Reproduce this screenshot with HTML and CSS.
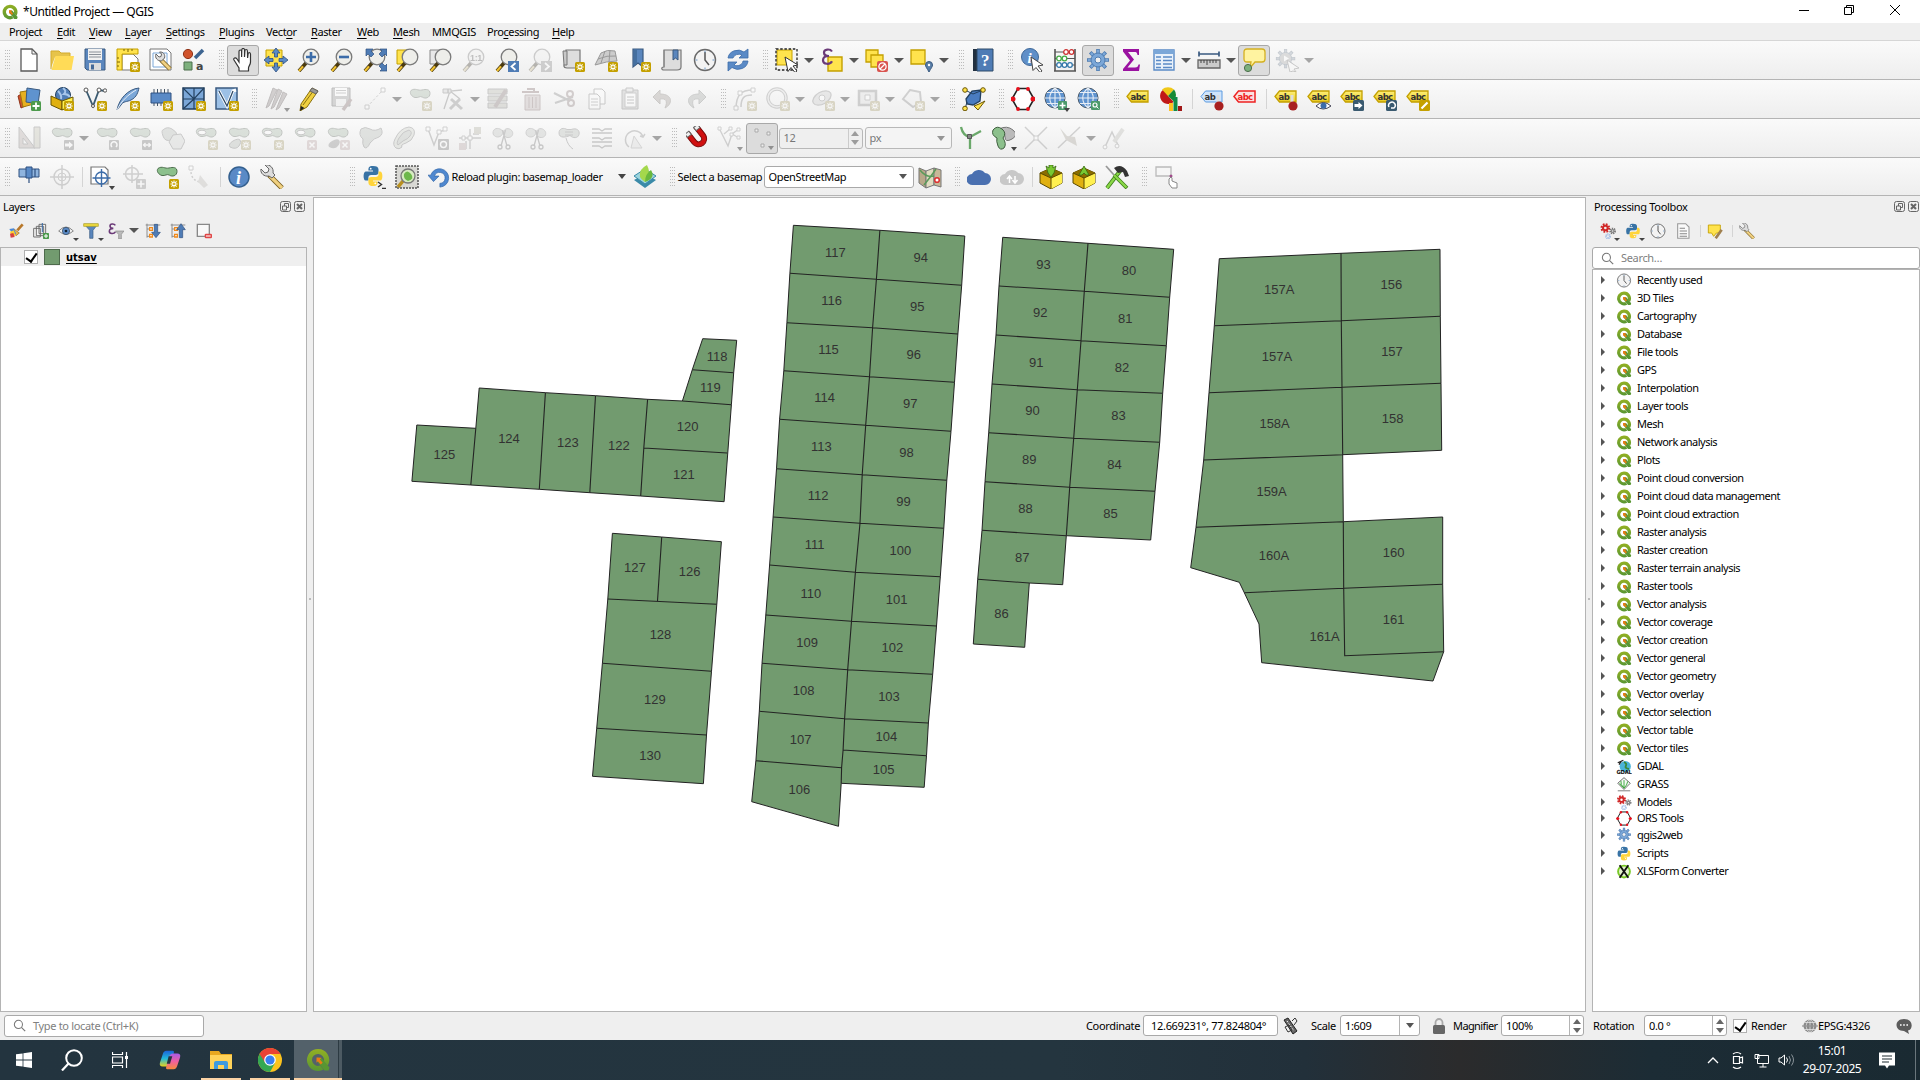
FILE: index.html
```html
<!DOCTYPE html>
<html lang="en">
<head>
<meta charset="utf-8">
<title>*Untitled Project — QGIS</title>
<link rel="stylesheet" href="styles.css">
</head>
<body>
<svg class="grads" aria-hidden="true">
<defs>
<linearGradient id="gq" x1="0" y1="0" x2="0" y2="1"><stop offset="0" stop-color="#93b023"/><stop offset="1" stop-color="#589632"/></linearGradient>
<linearGradient id="gl" x1="0" y1="0" x2="0" y2="1"><stop offset="0" stop-color="#fff07a"/><stop offset="1" stop-color="#e8c81c"/></linearGradient>
<linearGradient id="cp1" x1="0" y1="0" x2="0" y2="1"><stop offset="0" stop-color="#1b63d8"/><stop offset=".5" stop-color="#22b8d8"/><stop offset="1" stop-color="#e8d21c"/></linearGradient>
<linearGradient id="cp2" x1="0" y1="0" x2="0" y2="1"><stop offset="0" stop-color="#a95be8"/><stop offset=".5" stop-color="#ee5fa0"/><stop offset="1" stop-color="#f58a3c"/></linearGradient>
</defs>
</svg>
<svg class="defs" aria-hidden="true">
<defs>
<g id="star"><rect x="14" y="14" width="10" height="10" rx="1.5" fill="#c4a000"/><path d="M19 15.4v7.2M15.4 19h7.2M16.4 16.4l5.2 5.2M21.6 16.4l-5.2 5.2" stroke="#fff" stroke-width="1.1"/><circle cx="19" cy="19" r="1" fill="#c4a000"/></g>
<g id="blob"><path d="M3 3.500C7 .5 10 4 14 3s8-1 8 3.500-5 5.500-7.500 3.700-4.300 1-7.500.3S1 6 3 3.500z" fill="#8cc08c" stroke="#4d6e4d"/></g>
<g id="cross"><rect x="14" y="14" width="10" height="10" rx="1.500" fill="#e49a9a"/><path d="M16.500 16.500l5 5M21.500 16.500l-5 5" stroke="#fff" stroke-width="1.600"/></g>
<g id="glass"><path d="M2 23l7-8" stroke="#4a3a10" stroke-width="3.600"/><path d="M2 23l4-4.600" stroke="#f2c230" stroke-width="2.200"/><circle cx="14" cy="9" r="7.800" fill="#eeeeea" stroke="#7a7a7a" stroke-width="1.300"/></g>
<g id="gear"><path d="M12 1v22M1 12h22M4.200 4.200l15.600 15.600M19.800 4.200L4.200 19.800" stroke="#4f7cb0" stroke-width="3.600"/><path d="M12 1.800v20.400M1.800 12h20.400M4.900 4.900l14.200 14.200M19.100 4.900L4.900 19.100" stroke="#7ba7d8" stroke-width="2.200"/><circle cx="12" cy="12" r="7" fill="#7ba7d8" stroke="#4f7cb0"/><circle cx="12" cy="12" r="3" fill="#f0f0f0" stroke="#4f7cb0"/></g>
<g id="tag"><path d="M1 7.500L5.500 2H22v11H5.500z" fill="url(#gl)" stroke="#c4a000" stroke-width="1.300"/></g>
<g id="scis"><path d="M2 7c0-5 5-5.500 8-3.500S12 9 9 10.500 2 10 2 7zM12.500 7c0-4 4-5.500 7-3.500s3 6 0 7.500-7 0-7-4z" fill="#b9c4b9" stroke="#8a8a8a"/><path d="M11.500 4L16 20M14.500 4L10 20" stroke="#777" stroke-width="1.300"/><circle cx="9" cy="21" r="2" fill="none" stroke="#777" stroke-width="1.300"/><circle cx="17" cy="21" r="2" fill="none" stroke="#777" stroke-width="1.300"/></g>
<g id="globe"><circle cx="11" cy="11" r="10" fill="#5f93cf" stroke="#4a5a6a"/><path d="M1 11h20M3 5.500h16M3 16.500h16M11 1v20M11 1c-7 6-7 14 0 20M11 1c7 6 7 14 0 20" stroke="#e8eef6" stroke-width="1.100" fill="none"/></g>
<g id="box3"><path d="M1 8l11-5 11 5v10l-11 6L1 18z" fill="#e0b010" stroke="#5a4a00"/><path d="M12 13l11-5v10l-11 6z" fill="#fff050"/><path d="M1 8l11-5 11 5-11 5z" fill="#8a6d00"/><path d="M12 13v11M1 8l11 5 11-5" stroke="#5a4a00" fill="none"/></g>
</defs>
<symbol id="q" viewBox="0 0 24 24"><path d="M12 1a11 11 0 1 0 5.500 20.500L14 17.600a6 6 0 1 1 3.800-4.100l3.800 4.200A11 11 0 0 0 12 1z" fill="url(#gq)"/><path d="M11 9.500l4.500.5 8 9.500-1 3h-4L11.500 14z" fill="#589632"/><path d="M10.500 9.500l5 .3-1.600 1.800 2.800 3.200-1.900 1.800-2.900-3.300-1.400 1.500z" fill="#ee7913"/></symbol>
<symbol id="new" viewBox="0 0 24 24"><path d="M4 1h11l5 5v17H4z" fill="#fff" stroke="#5a5a5a" stroke-width="1.300"/><path d="M15 1v5h5" fill="none" stroke="#5a5a5a"/></symbol>
<symbol id="open" viewBox="0 0 24 24"><path d="M1 3h8l2 2h9v4H5L1 20z" fill="#e6c34a"/><path d="M5.500 8H24l-2.500 14H1.500z" fill="#ffdb57"/><path d="M1 21V3h8l2 2h9v3" fill="none" stroke="#d3ab2c"/></symbol>
<symbol id="save" viewBox="0 0 24 24"><path d="M2 1h20v21H4l-2-2z" fill="#5a86bd" stroke="#3a5a80"/><path d="M5 1h14v11H5z" fill="#f1f1f1"/><path d="M6 4h12M6 6.500h12M6 9h12" stroke="#8a9098"/><path d="M6 15h12v7H6z" fill="#ddd"/><path d="M8 16.500h3v5H8z" fill="#456a98"/></symbol>
<symbol id="layout" viewBox="0 0 24 24"><path d="M6 6h11l5 5v11H6z" fill="#fff" stroke="#777"/><path d="M1 1h21v5H6v16H1z" fill="#ffe34d" stroke="#c4a000"/><path d="M8 1v2M12 1v3M16 1v2M1 10h2M1 14h3M1 18h2" stroke="#7a6500"/><use href="#star"/></symbol>
<symbol id="lmgr" viewBox="0 0 24 24"><path d="M1 1h17l4 4v17H1z" fill="#fff" stroke="#777"/><path d="M4 5h14v14H4z" fill="#fff" stroke="#7ba7d8"/><path d="M12 12l9 9" stroke="#7a6020" stroke-width="4.500"/><path d="M12.500 12.500l8.500 8.500" stroke="#f0d080" stroke-width="2.800"/><path d="M7 6l3 3 2-.5.500-2.500-2-2c4-.5 6 3 5 6l-3 3c-4 0-7-3-5.500-7z" fill="#ddd" stroke="#666"/></symbol>
<symbol id="style" viewBox="0 0 24 24"><circle cx="6" cy="6" r="4.600" fill="#d0532c" stroke="#8e3318"/><path d="M13 10l8-8" stroke="#3c6490" stroke-width="3.600"/><path d="M2 14h8v8H2z" fill="#7db07d" stroke="#4d6e4d"/><text x="14" y="22" font-family="DejaVu Sans" font-size="11" fill="#444">a</text></symbol>
<symbol id="hand" viewBox="0 0 24 24"><path d="M8 23v-3L3 12c-1-2 1.500-3 3-1l2 3V3.500c0-2 2.600-2 2.600 0V9l.2-7c0-2 2.700-2 2.700 0v7l.4-6c0-2 2.500-2 2.500 0l.2 7 .5-4c.2-2 2.400-1.700 2.400.2V14c0 3-2 4-2 6v3z" fill="#fff" stroke="#333" stroke-width="1.200"/></symbol>
<symbol id="pan" viewBox="0 0 24 24"><path d="M2 2h16v16H2z" fill="#ffe34d" stroke="#c4a000"/><path d="M12 0l4 5h-2.500v4h-3V5H8zM12 24l4-5h-2.500v-4h-3v4H8zM0 12l5-4v2.500h4v3H5V16zM24 12l-5-4v2.500h-4v3h4V16z" fill="#5a8ac6" stroke="#2f5080" stroke-width=".800"/></symbol>
<symbol id="zin" viewBox="0 0 24 24"><use href="#glass"/><path d="M14 4v10M9 9h10" stroke="#3c6ca8" stroke-width="2.600"/></symbol>
<symbol id="zout" viewBox="0 0 24 24"><use href="#glass"/><path d="M9 9h10" stroke="#3c6ca8" stroke-width="2.600"/></symbol>
<symbol id="zfull" viewBox="0 0 24 24"><use href="#glass"/><path d="M3 1h7L8 3l3 3-3 3-3-3-2 2zM24 1v7l-2-2-3 3-3-3 3-3-2-2zM24 23h-7l2-2-3-3 3-3 3 3 2-2z" fill="#4f7cb5" stroke="#2f5080" stroke-width=".700"/></symbol>
<symbol id="zsel" viewBox="0 0 24 24"><path d="M1 2h10v14H1z" fill="#ffe34d" stroke="#c4a000"/><use href="#glass"/></symbol>
<symbol id="zlay" viewBox="0 0 24 24"><path d="M1 2h10v14H1z" fill="#e8e8e8" stroke="#888"/><use href="#glass"/></symbol>
<symbol id="z11" viewBox="0 0 24 24"><use href="#glass"/><text x="8" y="12.500" font-family="Liberation Sans" font-weight="bold" font-size="9" fill="#555">1:1</text></symbol>
<symbol id="zlast" viewBox="0 0 24 24"><use href="#glass"/><path d="M13 13h11v11H13z" fill="#4f7cb5"/><path d="M20.500 15l-4 3.500 4 3.500" fill="none" stroke="#fff" stroke-width="1.800"/></symbol>
<symbol id="znext" viewBox="0 0 24 24"><use href="#glass"/><path d="M13 13h11v11H13z" fill="#888"/><path d="M17 15l4 3.500-4 3.500" fill="none" stroke="#fff" stroke-width="1.800"/></symbol>
<symbol id="nmap" viewBox="0 0 24 24"><path d="M5 2h14v18H6c-4 0-4-4-1-4z" fill="#ddd" stroke="#777" stroke-width="1.200"/><path d="M2 3h4v14H3z" fill="#c8c8c8" stroke="#777"/><use href="#star"/></symbol>
<symbol id="n3d" viewBox="0 0 24 24"><path d="M7 5q6-4 14-2l2 10q-10 0-22 4z" fill="#ccc" stroke="#999"/><path d="M4 11q9-4 18-3M11 3L7 15M16 2l-1 12" stroke="#999" fill="none"/><use href="#star"/></symbol>
<symbol id="nbk" viewBox="0 0 24 24"><path d="M6 1h10v18l-5-4-5 4z" fill="#5a86bd" stroke="#3a5a80" stroke-width="1.200"/><path d="M7 1.500h3v14L7 18z" fill="#456f9f"/><use href="#star"/></symbol>
<symbol id="bk" viewBox="0 0 24 24"><path d="M4 2h17v17c0 3-2 3-4 3H4c-3 0-3-3 0-3z" fill="#ddd" stroke="#777" stroke-width="1.200"/><path d="M4 2v17" stroke="#888"/><path d="M13 2h5v10l-2.500-2-2.500 2z" fill="#5a86bd" stroke="#3a5a80"/></symbol>
<symbol id="clock" viewBox="0 0 24 24"><circle cx="12" cy="12" r="10.500" fill="#f3f3f3" stroke="#6a6a6a" stroke-width="1.400"/><path d="M12 4v8l4 5" fill="none" stroke="#555" stroke-width="1.500"/><path d="M12 2.500v2M12 19.500v2M2.500 12h2M19.500 12h2" stroke="#6d97c4"/></symbol>
<symbol id="refr" viewBox="0 0 24 24"><path d="M2 10a10 9 0 0 1 16-6l4-3v9h-9l3-3a6 5 0 0 0-9 3z" fill="#5a8ac6" stroke="#3c6ca8" stroke-width=".800"/><path d="M22 13a10 9 0 0 1-16 6.500L2 23v-9h9l-3 3a6 5 0 0 0 9-4z" fill="#5a8ac6" stroke="#3c6ca8" stroke-width=".800"/></symbol>
<symbol id="sel" viewBox="0 0 24 24"><path d="M2 2h15v15H2z" fill="#ffe34d" stroke="#c4a000"/><path d="M1 1h21v21H1z" fill="none" stroke="#222" stroke-width="1.300" stroke-dasharray="2.500 1.700"/><path d="M10 9l13 8-5 1 4 5-2 1.500-4-5-3 4z" fill="#fff" stroke="#333"/></symbol>
<symbol id="eps" viewBox="0 0 24 24"><path d="M8 9h14v14H8z" fill="#ffe34d" stroke="#c4a000" stroke-width="1.400"/><path d="M12 3.500C10 .5 4 1 4 4.500c0 2.500 2.500 3.500 5 3.500-3 0-6 1-6 4.200 0 4.300 7 4.800 9 1" fill="none" stroke="#6b3a78" stroke-width="2.200"/></symbol>
<symbol id="dsel" viewBox="0 0 24 24"><path d="M1 2h12v12H1z" fill="#ffe34d" stroke="#c4a000" stroke-width="1.300"/><path d="M6 7h12v12H6z" fill="#ffe34d" stroke="#c4a000" stroke-width="1.300"/><rect x="12" y="13" width="11" height="11" rx="2" fill="#d9534f"/><circle cx="17.500" cy="18.500" r="3.600" fill="none" stroke="#fff" stroke-width="1.300"/><path d="M15 21l5-5" stroke="#fff" stroke-width="1.300"/></symbol>
<symbol id="sloc" viewBox="0 0 24 24"><path d="M1 2h14v14H1z" fill="#ffe34d" stroke="#c4a000" stroke-width="1.300"/><path d="M19 24c-2-4-3.500-5-3.500-7a3.500 3.500 0 0 1 7 0c0 2-1.500 3-3.500 7z" fill="#5a7fa8" stroke="#3a5a80"/><circle cx="19" cy="17" r="1.200" fill="#fff"/></symbol>
<symbol id="help" viewBox="0 0 24 24"><path d="M2 1h4v22H2z" fill="#223040"/><path d="M6 1h16v22H6z" fill="#4f7cb5" stroke="#2f4a68"/><text x="10" y="18" font-family="Liberation Serif" font-size="17" fill="#fff">?</text></symbol>
<symbol id="idf" viewBox="0 0 24 24"><circle cx="10" cy="9" r="8.500" fill="#5f8fc8" stroke="#3f6898"/><text x="7.500" y="14.500" font-family="Liberation Serif" font-style="italic" font-weight="bold" font-size="15" fill="#fff">i</text><path d="M11 9l12 8-5 1 4 5-2 1.500-4-5-3 3z" fill="#fff" stroke="#444"/></symbol>
<symbol id="abac" viewBox="0 0 24 24"><path d="M2 1v22M22 1v22M1 23h22" stroke="#555" stroke-width="1.600"/><path d="M2 4h20M2 10.500h20M2 17h20" stroke="#555"/><g fill="#fff" stroke-width="1.300"><g stroke="#c33"><circle cx="13" cy="4" r="2.300"/><circle cx="18.500" cy="4" r="2.300"/></g><g stroke="#4a4"><circle cx="6" cy="10.500" r="2.300"/><circle cx="11.500" cy="10.500" r="2.300"/></g><g stroke="#37a"><circle cx="6" cy="17" r="2.300"/><circle cx="11.500" cy="17" r="2.300"/><circle cx="17" cy="17" r="2.300"/></g></g></symbol>
<symbol id="sgear" viewBox="0 0 24 24"><use href="#gear"/></symbol>
<symbol id="sum" viewBox="0 0 24 24"><path d="M4 1h16v6h-1.500c-.5-2.500-1-3-3.500-3H9l6 7.500L8.500 19.500H16c2.500 0 3-1 3.500-3H21L20 23H4v-2l7-8.500L4 3.500z" fill="#9a12a0"/></symbol>
<symbol id="table" viewBox="0 0 24 24"><path d="M2 2h20v20H2z" fill="#e9f1fa" stroke="#5a8ac6" stroke-width="1.400"/><path d="M2 2h20v4H2z" fill="#7ba7d8"/><path d="M4 9h5M11 9h9M4 12.500h5M11 12.500h9M4 16h5M11 16h9M4 19.500h5M11 19.500h9" stroke="#5a8ac6" stroke-width="1.300"/></symbol>
<symbol id="ruler" viewBox="0 0 24 24"><path d="M2 6h20M2 3.500v5M22 3.500v5" stroke="#3a5a80" stroke-width="1.700"/><path d="M1 12h22v8H1z" fill="#ccc" stroke="#666" stroke-width="1.300"/><path d="M4 12v3M7 12v3M10 12v5M13 12v3M16 12v3M19 12v3" stroke="#444"/></symbol>
<symbol id="tip" viewBox="0 0 24 24"><path d="M5 1h15q3 0 3 3v7q0 3-3 3h-7l-5 6 1-6H5q-3 0-3-3V4q0-3 3-3z" fill="#fff3a0" stroke="#d4b020" stroke-width="1.300"/><circle cx="6" cy="20" r="3.600" fill="#7db07d" stroke="#4d6e4d"/></symbol>
<symbol id="act" viewBox="0 0 24 24"><g transform="scale(.88)"><use href="#gear"/></g><circle cx="10.500" cy="10.500" r="5.500" fill="#aaa"/><path d="M9 7.500l5 3-5 3z" fill="#fff"/><path d="M12 12l12 8-5 1 2 3-3-1-3 1z" fill="#fff" stroke="#777"/></symbol>
<symbol id="dsm" viewBox="0 0 24 24"><path d="M1 9l10-6 3 13-10 5z" fill="#d0532c" stroke="#8e3318"/><path d="M3 5l12-2 2 14-11 3z" fill="#e8b020" stroke="#a07810"/><path d="M10 1l13 2-2 14-12-2z" fill="#5f93cf" stroke="#3a5a80"/><rect x="14" y="14" width="10" height="10" rx="1.500" fill="#4c9a4c"/><path d="M19 15.500v7M15.500 19h7" stroke="#fff" stroke-width="1.800"/></symbol>
<symbol id="gpkg" viewBox="0 0 24 24"><circle cx="13" cy="8" r="7.500" fill="#4f7cb5" stroke="#23405f"/><path d="M8 4q4 4 3 8M13 1q4 3 1 6 4 0 6 3" stroke="#a8c6ea" stroke-width="2" fill="none"/><path d="M1 9l11 5v9L1 18z" fill="#e0b010" stroke="#6a5500"/><path d="M12 14l11-4v8l-11 5z" fill="#fff050" stroke="#6a5500"/><use href="#star"/></symbol>
<symbol id="vnew" viewBox="0 0 24 24"><path d="M3 3l7 16L16 3l6 1" fill="none" stroke="#3a5a70" stroke-width="1.800"/><g fill="#fff" stroke="#555"><circle cx="3" cy="3" r="2"/><circle cx="16" cy="3" r="2"/><circle cx="22" cy="3.500" r="1.700"/><circle cx="10" cy="19" r="1.500"/></g><use href="#star"/></symbol>
<symbol id="spl" viewBox="0 0 24 24"><path d="M1 23C3 12 12 2 23 1c-1 4-2 9-8 12-4 2-8 1-10 5z" fill="#7ba7d8" stroke="#3a5a80"/><path d="M1 23C6 13 12 8 20 3" fill="none" stroke="#e8eef6"/><use href="#star"/></symbol>
<symbol id="mem" viewBox="0 0 24 24"><path d="M5 2v17M8.500 2v17M12 2v17M15.500 2v17M19 2v17" stroke="#456"/><path d="M2 6h20v10H2z" fill="#5a8ac6" stroke="#2f5080"/><use href="#star"/></symbol>
<symbol id="mesh" viewBox="0 0 24 24"><path d="M1 1h21v21H1z" fill="#7ba7d8" stroke="#23405f" stroke-width="1.500"/><path d="M1 12h21M12 1v21M1 1l11 11L22 1M1 22l11-10" stroke="#23405f" stroke-width="1.200" fill="none"/><use href="#star"/></symbol>
<symbol id="virt" viewBox="0 0 24 24"><path d="M1 1h21v21H1z" fill="#9cc0e6" stroke="#3a5a80" stroke-width="1.500"/><path d="M4 4l8 15L18 4l3-1" fill="none" stroke="#fff" stroke-width="3"/><path d="M4 4l8 15L18 4" fill="none" stroke="#2f4a68" stroke-width="1.300"/><use href="#star"/></symbol>
<symbol id="pens" viewBox="0 0 24 24"><path d="M2 21L9 1l4 2L5 19zM7 22L14 2l4 2-8 16zM12 23l7-18 4 2-8 14z" fill="#a08080" stroke="#6a5050"/></symbol>
<symbol id="pen" viewBox="0 0 24 24"><path d="M4 17L15 1l6 3L10 20l-7 4z" fill="#f0d040" stroke="#8a7010"/><path d="M6 18L17 3" stroke="#8a7010"/><path d="M15 1l6 3-2 3-6-3z" stroke="#666" fill="#999"/><path d="M3 24l1-5 3.500 2z" fill="#222"/></symbol>
<symbol id="saved" viewBox="0 0 24 24"><path d="M2 1h18v18H2z" fill="#999" stroke="#555"/><path d="M5 1h12v8H5z" fill="#fff"/><path d="M6 3.500h10M6 6h10" stroke="#888"/><path d="M6 12h10v7H6z" fill="#eee"/><path d="M13 23l8-11" stroke="#a66" stroke-width="3.500"/></symbol>
<symbol id="seg" viewBox="0 0 24 24"><path d="M4 20L20 3" stroke="#888" stroke-dasharray="2.500 2"/><path d="M2 18h4v4H2zM18 1h4v4h-4z" fill="#fff" stroke="#888"/></symbol>
<symbol id="addp" viewBox="0 0 24 24"><use href="#blob"/><use href="#star"/></symbol>
<symbol id="vtool" viewBox="0 0 24 24"><path d="M3 22L9 4l12-1M9 4l10 8" stroke="#777" stroke-width="1.300" fill="none"/><path d="M2 2h5v4H2zM7 2h3v4H7z" fill="#ccc" stroke="#777"/><path d="M9 22l10-10M10 12l11 10" stroke="#888" stroke-width="3"/></symbol>
<symbol id="mod" viewBox="0 0 24 24"><path d="M2 2h19v5H2zM2 9h19v5H2zM2 16h19v5H2z" fill="#b8b89a" stroke="#777"/><path d="M9 20L20 3" stroke="#a07070" stroke-width="4"/></symbol>
<symbol id="trash" viewBox="0 0 24 24"><path d="M3 5h17M8 2h7v3" stroke="#a66" stroke-width="2" fill="none"/><path d="M6 8h15v15H6z" fill="#d8b0b0" stroke="#a66"/><path d="M10 10v11M13.500 10v11M17 10v11" stroke="#a66"/></symbol>
<symbol id="cut" viewBox="0 0 24 24"><path d="M2 6l16 8M3 16l18-6" stroke="#888" stroke-width="2.200"/><circle cx="19" cy="16" r="3" fill="none" stroke="#a77" stroke-width="2"/><circle cx="18" cy="7" r="3" fill="none" stroke="#a77" stroke-width="2"/></symbol>
<symbol id="copy" viewBox="0 0 24 24"><path d="M9 2h8l3 3v12H9z" fill="#fff" stroke="#777"/><path d="M4 7h8l3 3v12H4z" fill="#fff" stroke="#777"/><path d="M6 12h7M6 15h7M6 18h7" stroke="#888"/></symbol>
<symbol id="paste" viewBox="0 0 24 24"><path d="M4 3h16v19H4z" fill="#bbb" stroke="#777"/><path d="M7 6h11v14H7z" fill="#fff" stroke="#888"/><path d="M8 1h7v4H8zM9 10h7M9 13h7M9 16h7" fill="#ddd" stroke="#777"/></symbol>
<symbol id="undo" viewBox="0 0 24 24"><path d="M9 3L2 10l7 7v-5c6-1 8 2 5 9 8-4 8-14-5-14z" fill="#b09a88" stroke="#8a7a6a"/></symbol>
<symbol id="redo" viewBox="0 0 24 24"><path d="M15 3l7 7-7 7v-5c-6-1-8 2-5 9-8-4-8-14 5-14z" fill="#a0aaa0" stroke="#7a847a"/></symbol>
<symbol id="arc" viewBox="0 0 24 24"><path d="M3 22C3 8 8 3 20 3M8 20c0-9 3-12 11-12" fill="none" stroke="#888" stroke-width="1.500"/><path d="M1 19h4v4H1zM18 1h4v4h-4zM5 4h4v4H5z" fill="#fff" stroke="#888"/><use href="#star"/></symbol>
<symbol id="circ" viewBox="0 0 24 24"><circle cx="11" cy="11" r="9" fill="none" stroke="#888" stroke-width="3.500"/><circle cx="11" cy="11" r="9" fill="none" stroke="#ddd" stroke-width="1.500"/><use href="#star"/></symbol>
<symbol id="ell" viewBox="0 0 24 24"><ellipse cx="11" cy="11" rx="10" ry="6" transform="rotate(-30 11 11)" fill="#ccc" stroke="#888" stroke-width="1.300"/><circle cx="11" cy="11" r="3" fill="#fff" stroke="#888"/><use href="#star"/></symbol>
<symbol id="rect" viewBox="0 0 24 24"><path d="M3 4h17v14H3z" fill="#ddd" stroke="#888" stroke-width="2.500"/><path d="M9 8h5v5H9z" fill="#fff" stroke="#888"/><use href="#star"/></symbol>
<symbol id="poly" viewBox="0 0 24 24"><path d="M9 3l10 2 1 10-8 5-10-8z" fill="#eee" stroke="#888" stroke-width="2"/><use href="#star"/></symbol>
<symbol id="dig" viewBox="0 0 24 24"><path d="M4 12L10 4l9-1-1 11-7 4-6-1z" fill="#4a7cc0" stroke="#23405f" stroke-width="1.300"/><path d="M3 3l8 4 10-4M3 22L5 15" stroke="#23405f" fill="none"/><g fill="#ffe34d" stroke="#6a5500"><circle cx="3" cy="3" r="2.300"/><circle cx="21" cy="3" r="2.300"/><circle cx="3" cy="21.500" r="2.300"/></g><path d="M12 19l4 4 7-9-6 3z" fill="#ffe34d" stroke="#6a5500"/></symbol>
<symbol id="ors" viewBox="0 0 24 24"><path d="M7 1.500h10L23 12l-6 10.500H7L1 12z" fill="#fff" stroke="#222" stroke-width="1.600"/><g fill="#e8101c"><circle cx="7" cy="2" r="1.900"/><circle cx="17" cy="2" r="1.900"/><circle cx="22" cy="12" r="2.500"/><circle cx="17" cy="22" r="1.900"/><circle cx="7" cy="22" r="1.900"/><circle cx="2" cy="12" r="2.500"/></g></symbol>
<symbol id="gadd" viewBox="0 0 24 24"><use href="#globe"/><rect x="14" y="14" width="9" height="9" rx="1" fill="#4c9a6c"/><path d="M18.500 15.500v6M15.500 18.500h6" stroke="#fff" stroke-width="1.600"/></symbol>
<symbol id="gsea" viewBox="0 0 24 24"><use href="#globe"/><rect x="14" y="14" width="9" height="9" rx="1" fill="#4c9a6c"/><circle cx="18" cy="18" r="2" fill="none" stroke="#fff" stroke-width="1.200"/><path d="M19.500 19.500l2 2" stroke="#fff"/></symbol>
<symbol id="abc" viewBox="0 0 24 24"><use href="#tag" y="2"/><text class="lt" x="4.500" y="13">abc</text></symbol>
<symbol id="dia" viewBox="0 0 24 24"><path d="M9 9V1a8 8 0 1 0 5.700 13.700z" fill="#c01818"/><path d="M9 9L3 2.500a9 9 0 0 1 12 0z" fill="#f0c818"/><path d="M9 9l6-6.500q4 5 0 12z" fill="#158a35"/><path d="M10 16h4v8h-4z" fill="#ffc020"/><path d="M14.500 10h4v14h-4z" fill="#108a48"/><path d="M19 19h4v5h-4z" fill="#a01818"/></symbol>
<symbol id="abb" viewBox="0 0 24 24"><path d="M1 9.500L5.500 4H22v11H5.500z" fill="#cfe4fb" stroke="#5a9ae0"/><text class="lt" x="4.500" y="13">ab</text><path d="M18 8v8" stroke="#ddd" stroke-width="3"/><circle cx="19" cy="19" r="4.600" fill="#a82020"/></symbol>
<symbol id="abr" viewBox="0 0 24 24"><path d="M1 9.500L5.500 4H22v11H5.500z" fill="#fbe0e0" stroke="#e22" stroke-width="1.500"/><text class="lt red" x="4.500" y="13">abc</text></symbol>
<symbol id="abp" viewBox="0 0 24 24"><use href="#tag" y="2"/><text class="lt" x="4.500" y="13">ab</text><path d="M18 8v8" stroke="#ddd" stroke-width="3"/><circle cx="19" cy="19" r="4.600" fill="#a82020"/></symbol>
<symbol id="abe" viewBox="0 0 24 24"><use href="#tag" y="2"/><text class="lt" x="4.500" y="13">abc</text><path d="M9 19q7-7 15 0-8 6-15 0z" fill="#fff" stroke="#445"/><circle cx="16.500" cy="18.800" r="3" fill="#3c6ca8"/></symbol>
<symbol id="abm" viewBox="0 0 24 24"><use href="#tag" y="2"/><text class="lt" x="4.500" y="13">abc</text><rect x="13" y="13" width="11" height="11" rx="1.500" fill="#3a5a70"/><path d="M14.500 17h4v-2l4 3.500-4 3.500v-2h-4z" fill="#fff"/></symbol>
<symbol id="abo" viewBox="0 0 24 24"><use href="#tag" y="2"/><text class="lt" x="4.500" y="13">abc</text><rect x="13" y="13" width="11" height="11" rx="1.500" fill="#3a5a70"/><path d="M16 20a3.300 3.300 0 1 1 5 1h-3" fill="none" stroke="#fff" stroke-width="1.500"/></symbol>
<symbol id="abd" viewBox="0 0 24 24"><use href="#tag" y="2"/><text class="lt" x="4.500" y="13">abc</text><rect x="13" y="13" width="11" height="11" rx="1.500" fill="#c4a000"/><path d="M15.500 21.500l6-6" stroke="#fff" stroke-width="2.200"/></symbol>
<symbol id="setsq" viewBox="0 0 24 24"><path d="M2 1l16 21H2zM6 12v6h5z" fill="#c8a89c" stroke="#777" fill-rule="evenodd"/><path d="M17 1h6v21h-6z" fill="#c8c490" stroke="#777"/></symbol>
<symbol id="mvf" viewBox="0 0 24 24"><use href="#blob"/><rect x="14" y="14" width="10" height="10" rx="1" fill="#777"/><path d="M15 17.500h4v-2l4 3.500-4 3.500v-2h-4z" fill="#fff"/></symbol>
<symbol id="rotf" viewBox="0 0 24 24"><use href="#blob"/><rect x="14" y="14" width="10" height="10" rx="1" fill="#777"/><path d="M17 21a3 3 0 1 1 4 0" fill="none" stroke="#fff" stroke-width="1.500"/></symbol>
<symbol id="sclf" viewBox="0 0 24 24"><use href="#blob"/><rect x="14" y="14" width="10" height="10" rx="1" fill="#777"/><path d="M16 19h6M17.500 17l-2 2 2 2M20.500 17l2 2-2 2" stroke="#fff" fill="none" stroke-width="1.300"/></symbol>
<symbol id="simp" viewBox="0 0 24 24"><path d="M2 4q4-4 9-1t5 6-6 5-8-4 0-6z" fill="#a9c0a9" stroke="#777"/><path d="M12 9l8-1 4 7-4 8h-8l-4-7z" fill="#cdd6cd" stroke="#777"/></symbol>
<symbol id="ring" viewBox="0 0 24 24"><use href="#blob"/><ellipse cx="8" cy="6.500" rx="4" ry="2.300" fill="#fff" stroke="#777"/><use href="#star"/></symbol>
<symbol id="part" viewBox="0 0 24 24"><use href="#blob"/><path d="M3 21q-2-3 3-6t7-1-1 6-9 1z" fill="#a9c0a9" stroke="#777"/><use href="#star"/></symbol>
<symbol id="dring" viewBox="0 0 24 24"><use href="#blob"/><ellipse cx="8" cy="6.500" rx="4" ry="2.300" fill="#fff" stroke="#777"/><use href="#cross"/></symbol>
<symbol id="dpart" viewBox="0 0 24 24"><use href="#blob"/><path d="M3 21q-2-3 3-6t7-1-1 6-9 1z" fill="#888"/><use href="#cross"/></symbol>
<symbol id="resh" viewBox="0 0 24 24"><path d="M2 3q4-3 9 0t11-1q3 6-2 9-5 1-9 6-3 7-6 4-2-3-1-8-5-4-2-10z" fill="#a9c0a9" stroke="#777"/></symbol>
<symbol id="offs" viewBox="0 0 24 24"><path d="M4 22q-4-3-1-9Q8 2 17 1q7 1 5 8-2 6-8 8t-4 4q-3 3-6 1z" fill="#c8d4b8" stroke="#777"/><path d="M6 19q-2-2 1-7 4-7 10-8 4 2 1 6-2 3-7 5z" fill="#a9c0a9" stroke="#777"/></symbol>
<symbol id="spf" viewBox="0 0 24 24"><path d="M3 3l6 16L14 6l6-2" fill="none" stroke="#888" stroke-width="1.500"/><path d="M1 1h4v4H1zM12 4h4v4h-4zM18 1h4v4h-4z" fill="#fff" stroke="#888"/><rect x="13" y="13" width="11" height="11" rx="1" fill="#777"/><circle cx="18.500" cy="18.500" r="3" fill="none" stroke="#fff" stroke-width="1.400"/></symbol>
<symbol id="spx" viewBox="0 0 24 24"><path d="M1 12h22M12 3v20M15 8h6M8 15v8" stroke="#888" stroke-width="1.400"/><path d="M10 10h4v4h-4zM4 10h3v4H4z" fill="#fff" stroke="#888"/><rect x="16" y="1" width="7" height="7" fill="#b8b080"/><rect x="1" y="17" width="7" height="7" fill="#d8a0a0"/></symbol>
<symbol id="sc" viewBox="0 0 24 24"><use href="#scis"/></symbol>
<symbol id="mrg" viewBox="0 0 24 24"><path d="M2 7c0-5 5-5.500 8-3.500h4c6-2 9 1 8 5s-6 4-9 1c-4 2-11 3-11-2.500z" fill="#a9c0a9" stroke="#777"/><path d="M8 6h8M8 9h8M9 12q2 8 7 11" stroke="#777" fill="none"/></symbol>
<symbol id="attr" viewBox="0 0 24 24"><path d="M2 3h7l3 2 3-2h7M2 7h20M2 12h7l3 2 3-2h7M2 16h20M2 20h7l3 2 3-2h7" stroke="#777" stroke-width="1.300" fill="none"/></symbol>
<symbol id="rpt" viewBox="0 0 24 24"><path d="M6 21a9 9 0 1 1 14-10M17 10l3 1 2-3" fill="none" stroke="#888" stroke-width="1.500"/><path d="M11 10l8 12H8z" fill="#ddd" stroke="#999"/></symbol>
<symbol id="mag" viewBox="0 0 24 24"><g transform="rotate(-38 12 12)"><path d="M4 2h5v11a3 3 0 0 0 6 0V2h5v11a8 8 0 0 1-16 0z" fill="#d01010" stroke="#7a0808"/><path d="M4 1h5v4H4zM15 1h5v4h-5z" fill="#eee" stroke="#666"/></g></symbol>
<symbol id="vall" viewBox="0 0 24 24"><path d="M2 2l9 18L15 8l7-5M15 8l7 4M7 8l6-5" fill="none" stroke="#888" stroke-width="1.400"/><path d="M1 1h3v3H1zM12 1h3v3h-3zM20 2h3v3h-3zM20 10h3v3h-3zM13 7h3v3h-3z" fill="#fff" stroke="#888"/></symbol>
<symbol id="dots" viewBox="0 0 24 24"><path d="M5 3h3v3H5zM17 6h3v3h-3zM11 18h3v3h-3z" fill="#eee" stroke="#aaa"/></symbol>
<symbol id="topo" viewBox="0 0 24 24"><path d="M3 1q2 9 9 10v12M12 11l11-6" fill="none" stroke="#6aa86a" stroke-width="2.300"/><path d="M9.500 8.500h4v4h-4z" fill="#888" stroke="#555"/></symbol>
<symbol id="over" viewBox="0 0 24 24"><path d="M8 3q8-4 14 1t-1 9-7-2-6-8z" fill="#bbb" stroke="#777"/><path d="M2 4q4-5 9-1t1 9q4 6 1 10-4 3-6-2t-1-8q-6-3-4-8z" fill="#8cc08c" stroke="#3f5f3f"/></symbol>
<symbol id="xx" viewBox="0 0 24 24"><path d="M1 1l22 22M23 1L1 23" stroke="#888" stroke-width="1.500"/><path d="M10 10h4v4h-4z" fill="#fff" stroke="#888"/></symbol>
<symbol id="selfx" viewBox="0 0 24 24"><path d="M1 22L23 1" stroke="#888" stroke-width="1.500"/><path d="M3 2l6 12 11 6-2-9-8-1z" fill="#b0a080"/></symbol>
<symbol id="trc" viewBox="0 0 24 24"><path d="M3 21L10 6l6 13" fill="none" stroke="#888" stroke-width="1.500"/><path d="M12 16L21 3" stroke="#b8b8a8" stroke-width="4"/><circle cx="3" cy="21" r="2" fill="#fff" stroke="#888"/><circle cx="15" cy="20" r="2" fill="#fff" stroke="#888"/></symbol>
<symbol id="gpsd" viewBox="0 0 24 24"><path d="M2 4h20v8H2z" fill="#8fb4de" stroke="#2f5080"/><path d="M9 2h6v11H9z" fill="#5a8ac6" stroke="#2f5080"/><path d="M12 13v5M18 4v8" stroke="#2f5080" stroke-width="1.200"/></symbol>
<symbol id="tgt" viewBox="0 0 24 24"><circle cx="12" cy="12" r="8" fill="none" stroke="#888" stroke-width="1.500"/><circle cx="12" cy="12" r="4" fill="none" stroke="#888"/><path d="M12 0v24M0 12h24" stroke="#888" stroke-width="1.500"/></symbol>
<symbol id="recen" viewBox="0 0 24 24"><path d="M2 2h14l3 3v14H2z" fill="#fff" stroke="#777" stroke-width="1.200"/><circle cx="12.500" cy="13" r="6" fill="none" stroke="#3c6ca8" stroke-width="1.400"/><path d="M12.500 4v18M3.500 13h18" stroke="#3c6ca8" stroke-width="1.400"/></symbol>
<symbol id="tadd" viewBox="0 0 24 24"><circle cx="10" cy="9" r="6.500" fill="none" stroke="#888" stroke-width="1.500"/><path d="M10 0v18M1 9h20" stroke="#888" stroke-width="1.500"/><rect x="14" y="14" width="10" height="10" rx="1" fill="#888"/><path d="M19 15.500v7M15.500 19h7" stroke="#fff" stroke-width="1.600"/></symbol>
<symbol id="trk" viewBox="0 0 24 24"><path d="M3 3q-1 13 10 14" fill="none" stroke="#888" stroke-dasharray="2 2" stroke-width="1.500"/><path d="M1 1h4v4H1z" fill="#fff" stroke="#888"/><path d="M12 10l8 10-4 3-6-6z" fill="#c0b8a8"/></symbol>
<symbol id="info" viewBox="0 0 24 24"><circle cx="12" cy="12" r="10" fill="#5a8ac6" stroke="#34608f" stroke-width="1.500"/><text x="9" y="18.500" font-family="Liberation Serif" font-style="italic" font-weight="bold" font-size="18" fill="#fff">i</text></symbol>
<symbol id="wren" viewBox="0 0 24 24"><path d="M9 10l13 13" stroke="#7a6020" stroke-width="5"/><path d="M10 11l12 12" stroke="#f0d080" stroke-width="3.200"/><path d="M1 4l4 4 3-1 1-3-4-4c5-1 9 3 8 8l2 2-3 3-3-2C4 12 0 8 1 4z" fill="#ddd" stroke="#666"/></symbol>
<symbol id="py" viewBox="0 0 24 24"><path d="M12 1C7 1 7 3 7 6h5v1H4C1 7 1 17 4 17h3v-3c0-2 1-3 3-3h5c2 0 3-1 3-3V5c0-3-2-4-6-4z" fill="#3873a5"/><path d="M12 23c5 0 5-2 5-5h-5v-1h8c3 0 3-10 0-10h-2v3c0 2-1 3-3 3h-5c-2 0-3 1-3 3v3c0 3 2 4 5 4z" fill="#ffd43b"/><circle cx="9.500" cy="4" r="1" fill="#fff"/><circle cx="14.500" cy="20" r="1" fill="#fff"/></symbol>
<symbol id="pyc" viewBox="0 0 24 24"><use href="#py" width="22" height="22"/><path d="M16 17l3.500 2.500L16 22M20 23.500h4" stroke="#333" stroke-width="1.400" fill="none"/></symbol>
<symbol id="qms" viewBox="0 0 24 24"><path d="M1 1h22v22H1z" fill="#d8d8d4" stroke="#555" stroke-width="1.500" stroke-dasharray="2 1"/><path d="M3 22l5-6" stroke="#b89020" stroke-width="3.500"/><circle cx="13" cy="11" r="7" fill="#d6ecc0" stroke="#777" stroke-width="1.300"/><path d="M9 9q3-5 7 0t-3 7q-5-2-4-7z" fill="#6cb84a"/></symbol>
<symbol id="rel" viewBox="0 0 24 24"><path d="M7 11a6 6 0 1 1 6 8v4A10 10 0 1 0 3 10H0l6 7 6-6z" fill="#4f88d0" stroke="#3468a8" stroke-width=".800"/></symbol>
<symbol id="leaf" viewBox="0 0 24 24"><path d="M1 15l11-6 11 6-11 8z" fill="#3a8aa8"/><path d="M1 11l11-7 11 7-11 8z" fill="#9cd4dc" stroke="#3a8aa8"/><path d="M12 17Q4 12 8 5q2-3 6-5 5 9-2 17z" fill="#a4d84c"/><path d="M12 17Q12 9 18 5q5 8-6 12z" fill="#6ab83c"/></symbol>
<symbol id="fold" viewBox="0 0 24 24"><path d="M1 3l7 3v17l-7-5z" fill="#b8a888" stroke="#777"/><path d="M8 6l8-3v17l-8 3z" fill="#e0dcc0" stroke="#777"/><path d="M16 3l7 2v17l-7-2z" fill="#c8b898" stroke="#777"/><path d="M2 5q6 8 14 6M6 20q8-10 12-16" stroke="#5a9a5a" fill="none" stroke-width="1.500"/><circle cx="19" cy="15" r="2.300" fill="#fff" stroke="#d33" stroke-width="1.600"/></symbol>
<symbol id="cld" viewBox="0 0 24 24"><path d="M6 20a6 5.500 0 0 1-1-11 7.500 7 0 0 1 13-1 6 6 0 0 1 0 12z" fill="#4a70b0"/></symbol>
<symbol id="cldg" viewBox="0 0 24 24"><path d="M6 20a6 5.500 0 0 1-1-11 7.500 7 0 0 1 13-1 6 6 0 0 1 0 12z" fill="#c8c8c8"/><path d="M9.500 18v-6M7 14l2.500-3 2.500 3M15 11v6M12.500 15l2.500 3 2.500-3" stroke="#fff" stroke-width="1.500" fill="none"/></symbol>
<symbol id="bdn" viewBox="0 0 24 24"><use href="#box3"/><path d="M7 1l3 2V0h4v3l3-2-2 7-3 4-3-4z" fill="#78c832" stroke="#3a6a10" stroke-width=".800"/></symbol>
<symbol id="bup" viewBox="0 0 24 24"><use href="#box3"/><path d="M12 1l5 9h-3l-2-2-2 2H7z" fill="#78c832" stroke="#3a6a10" stroke-width=".800"/></symbol>
<symbol id="hmr" viewBox="0 0 24 24"><path d="M2 23L15 6" stroke="#3a7a18" stroke-width="4"/><path d="M2 23L15 6" stroke="#8ad848" stroke-width="2.400"/><path d="M9 3q7-5 13 3l2 5-4 1-2-5-5 1z" fill="#333"/><path d="M9 10l13 13" stroke="#3a7a18" stroke-width="3.800"/><path d="M9 10l12.500 12.500" stroke="#8ad848" stroke-width="2.400"/><path d="M1 1l8 9" stroke="#999" stroke-width="1.800"/></symbol>
<symbol id="idr" viewBox="0 0 24 24"><path d="M2 2h15v9H2z" fill="#f6f6f6" stroke="#bbb" stroke-width="1.300"/><circle cx="17" cy="11" r="1.500" fill="#a04a8a"/><path d="M15 14v5l3 4h5v-5l-5-2v-3q-1-2-2 0z" fill="#fff" stroke="#888"/></symbol>
<symbol id="brush" viewBox="0 0 24 24"><path d="M14 11l8-9" stroke="#b8782a" stroke-width="4"/><path d="M9 9l8 6-5 4-6-6z" fill="#e8b850" stroke="#986820"/><path d="M2 9l7-1 3 8-4 2z" fill="#4a88d8"/><path d="M3 13l6-2 2 8-6 1z" fill="#ffd030"/><path d="M3 16l5-1 2 6-6 1z" fill="#d84040"/></symbol>
<symbol id="grp" viewBox="0 0 24 24"><path d="M1 8h10v13H1z M5 5h11v14H5zM9 2h10v14H9z" fill="#f4f4f4" stroke="#666" stroke-width="1.400"/><path d="M14 0v14" stroke="#3c6ca8" stroke-width="1.600"/><rect x="15" y="15" width="9" height="9" rx="1" fill="#4c9a4c"/><path d="M19.500 16.500v6M16.500 19.500h6" stroke="#fff" stroke-width="1.500"/></symbol>
<symbol id="eye" viewBox="0 0 24 24"><path d="M1 12Q12 0 23 12 12 22 1 12z" fill="#f2f2f2" stroke="#888" stroke-width="1.500"/><circle cx="12" cy="12" r="5.500" fill="#5a8ac6" stroke="#345"/><circle cx="12" cy="12" r="2" fill="#123"/></symbol>
<symbol id="filt" viewBox="0 0 24 24"><path d="M2 2h20l-7 9v12h-5V11z" fill="#5a86bd" stroke="#3a5a80"/><path d="M1 1h22v4H1z" fill="#f0dc40" stroke="#a89a20"/></symbol>
<symbol id="epf" viewBox="0 0 24 24"><path d="M11 3.500C9 .5 3 1 3 4.500 3 7 5.500 8 8 8c-3 0-6 1-6 4.200 0 4.300 7 4.800 9 1" fill="none" stroke="#6b3a78" stroke-width="2.400"/><path d="M11 12h13l-4 5v7h-4v-7z" fill="#bbb" stroke="#888"/></symbol>
<symbol id="exp" viewBox="0 0 24 24"><path d="M3 1v21M3 9h5M3 20h5M1 3h22" stroke="#888" stroke-width="1.400" fill="none"/><path d="M7 7h4v4H7zM7 17h4v4H7z" fill="#fff" stroke="#f08a1c" stroke-width="2"/><path d="M14 2h5v12h4l-6.500 8L10 14h4z" fill="#4f7cb5" stroke="#2f5080"/></symbol>
<symbol id="col" viewBox="0 0 24 24"><path d="M3 1v21M3 9h5M3 20h5M1 3h22" stroke="#888" stroke-width="1.400" fill="none"/><path d="M7 7h4v4H7zM7 17h4v4H7z" fill="#fff" stroke="#f08a1c" stroke-width="2"/><path d="M14 22h5V10h4L16.500 1 10 10h4z" fill="#4f7cb5" stroke="#2f5080"/></symbol>
<symbol id="rml" viewBox="0 0 24 24"><path d="M2 2h18v18H2z" fill="#f8f8f8" stroke="#888" stroke-width="2"/><rect x="13" y="16" width="11" height="7" rx="2" fill="#e04848"/><path d="M15 19.500h7" stroke="#fff" stroke-width="1.600"/></symbol>
<symbol id="gears" viewBox="0 0 24 24"><g fill="none"><circle cx="8" cy="7.500" r="5.500" stroke="#d02828" stroke-width="3.500" stroke-dasharray="2.500 1.820"/><circle cx="8" cy="7.500" r="3.500" stroke="#d02828" stroke-width="3"/><circle cx="19" cy="12" r="3.500" stroke="#777" stroke-width="3" stroke-dasharray="1.700 1.050"/><circle cx="19" cy="12" r="2" stroke="#888" stroke-width="2"/><circle cx="12" cy="20" r="3" stroke="#a4bfe6" stroke-width="3" stroke-dasharray="1.600 .750"/></g></symbol>
<symbol id="doc" viewBox="0 0 24 24"><path d="M4 1h12l5 5v17H4z" fill="#fafafa" stroke="#999" stroke-width="1.600"/><path d="M7 8h8M7 12h11M7 16h11M7 20h11" stroke="#888" stroke-width="1.600"/></symbol>
<symbol id="edm" viewBox="0 0 24 24"><path d="M2 3h18v12h-6l-4 5-3-5H2z" fill="#ffe34d" stroke="#c4a000" stroke-width="1.300"/><path d="M13 23l9-13" stroke="#a08050" stroke-width="4"/></symbol>
<symbol id="lens" viewBox="0 0 24 24"><circle cx="10" cy="10" r="7.500" fill="none" stroke="#777" stroke-width="1.900"/><path d="M15.500 15.500l7 7" stroke="#777" stroke-width="2.200"/></symbol>
<symbol id="gdal" viewBox="0 0 24 24"><circle cx="14" cy="12" r="9" fill="#4ab4d8"/><path d="M12 5q5 2 3 6t5 5" stroke="#3a8a3a" stroke-width="3" fill="none"/><path d="M2 6l9-4M4 9l4-6" stroke="#222" stroke-width="2"/><text x="0" y="24" font-family="DejaVu Sans" font-weight="bold" font-size="9" textLength="24" lengthAdjust="spacingAndGlyphs" fill="#111">GDAL</text></symbol>
<symbol id="grs" viewBox="0 0 24 24"><path d="M12 1l10 9-10 10L2 10z" fill="#f4f8f4" stroke="#555" stroke-width="1.300"/><path d="M12 18Q6 12 7 6M12 18V5M12 18q5-5 6-11M12 17Q5 13 5 10" stroke="#3aa83a" stroke-width="1.500" fill="none"/><path d="M2 22h20" stroke="#999" stroke-width="2"/></symbol>
<symbol id="xls" viewBox="0 0 24 24"><circle cx="12" cy="12" r="9.500" fill="#e4f4cc" stroke="#7ac828" stroke-width="3"/><path d="M5 2l14 20M19 2L5 22" stroke="#111" stroke-width="3"/></symbol>
<symbol id="chr" viewBox="0 0 24 24"><circle cx="12" cy="12" r="12" fill="#fcc31e"/><path d="M12 12L1.600 6a12 12 0 0 0 10.400 18l5-9z" fill="#34a853"/><path d="M1.600 6A12 12 0 0 1 22.400 6H12l-5 8.500z" fill="#ea4335"/><circle cx="12" cy="12" r="5.800" fill="#fff"/><circle cx="12" cy="12" r="4.600" fill="#3a7ff0"/></symbol>
</svg>

<header class="title"><svg class="logo"><use href="#q"/></svg><span>*Untitled Project — QGIS</span>
<svg class="wc" viewBox="0 0 104 12"><path d="M0 6.500h10" stroke="#000"/><path d="M45.500 3.500h7v7h-7zM47.500 3.500v-2h7v7h-2" fill="none" stroke="#000"/><path d="M91 1l10 10M101 1L91 11" stroke="#000"/></svg></header>
<nav class="menu"><span>Pro<u>j</u>ect</span><span><u>E</u>dit</span><span><u>V</u>iew</span><span><u>L</u>ayer</span><span><u>S</u>ettings</span><span><u>P</u>lugins</span><span>Vect<u>o</u>r</span><span><u>R</u>aster</span><span><u>W</u>eb</span><span><u>M</u>esh</span><span>MMQGIS</span><span>Pro<u>c</u>essing</span><span><u>H</u>elp</span></nav>

<div class="bar"><i class="grip"></i>
<b><svg><use href="#new"/></svg></b><b><svg><use href="#open"/></svg></b><b><svg><use href="#save"/></svg></b><b><svg><use href="#layout"/></svg></b><b><svg><use href="#lmgr"/></svg></b><b><svg><use href="#style"/></svg></b><i class="grip"></i>
<b class="on"><svg><use href="#hand"/></svg></b><b><svg><use href="#pan"/></svg></b><b><svg><use href="#zin"/></svg></b><b><svg><use href="#zout"/></svg></b><b><svg><use href="#zfull"/></svg></b><b><svg><use href="#zsel"/></svg></b><b><svg><use href="#zlay"/></svg></b><b class="off"><svg><use href="#z11"/></svg></b><b><svg><use href="#zlast"/></svg></b><b class="off"><svg><use href="#znext"/></svg></b><b><svg><use href="#nmap"/></svg></b><b><svg><use href="#n3d"/></svg></b><b><svg><use href="#nbk"/></svg></b><b><svg><use href="#bk"/></svg></b><b><svg><use href="#clock"/></svg></b><b><svg><use href="#refr"/></svg></b><i class="grip"></i>
<b class="d"><svg><use href="#sel"/></svg></b><b class="d"><svg><use href="#eps"/></svg></b><b class="d"><svg><use href="#dsel"/></svg></b><b class="d"><svg><use href="#sloc"/></svg></b><i class="grip"></i><b><svg><use href="#help"/></svg></b><i class="grip"></i>
<b><svg><use href="#idf"/></svg></b><b><svg><use href="#abac"/></svg></b><b class="on"><svg><use href="#sgear"/></svg></b><b><svg><use href="#sum"/></svg></b><b class="d"><svg><use href="#table"/></svg></b><b class="d"><svg><use href="#ruler"/></svg></b><b class="on"><svg><use href="#tip"/></svg></b><b class="d off"><svg><use href="#act"/></svg></b></div>

<div class="bar"><i class="grip"></i>
<b><svg><use href="#dsm"/></svg></b><b><svg><use href="#gpkg"/></svg></b><b><svg><use href="#vnew"/></svg></b><b><svg><use href="#spl"/></svg></b><b><svg><use href="#mem"/></svg></b><b><svg><use href="#mesh"/></svg></b><b><svg><use href="#virt"/></svg></b><i class="grip"></i>
<b class="m off"><svg><use href="#pens"/></svg></b><b><svg><use href="#pen"/></svg></b><b class="off"><svg><use href="#saved"/></svg></b><b class="d off"><svg><use href="#seg"/></svg></b><b class="off"><svg><use href="#addp"/></svg></b><b class="d off"><svg><use href="#vtool"/></svg></b><b class="off"><svg><use href="#mod"/></svg></b><b class="off"><svg><use href="#trash"/></svg></b><b class="off"><svg><use href="#cut"/></svg></b><b class="off"><svg><use href="#copy"/></svg></b><b class="off"><svg><use href="#paste"/></svg></b><b class="off"><svg><use href="#undo"/></svg></b><b class="off"><svg><use href="#redo"/></svg></b><i class="grip"></i>
<b class="off"><svg><use href="#arc"/></svg></b><b class="d off"><svg><use href="#circ"/></svg></b><b class="d off"><svg><use href="#ell"/></svg></b><b class="d off"><svg><use href="#rect"/></svg></b><b class="d off"><svg><use href="#poly"/></svg></b><i class="grip"></i><b><svg><use href="#dig"/></svg></b><i class="grip"></i>
<b><svg><use href="#ors"/></svg></b><b class="m"><svg><use href="#gadd"/></svg></b><b><svg><use href="#gsea"/></svg></b><i class="grip"></i>
<b><svg><use href="#abc"/></svg></b><b><svg><use href="#dia"/></svg></b><i class="sep"></i><b><svg><use href="#abb"/></svg></b><b><svg><use href="#abr"/></svg></b><i class="sep"></i><b><svg><use href="#abp"/></svg></b><b><svg><use href="#abe"/></svg></b><b><svg><use href="#abm"/></svg></b><b><svg><use href="#abo"/></svg></b><b><svg><use href="#abd"/></svg></b></div>

<div class="bar"><i class="grip"></i>
<b class="off"><svg><use href="#setsq"/></svg></b><b class="d off"><svg><use href="#mvf"/></svg></b><b class="off"><svg><use href="#rotf"/></svg></b><b class="off"><svg><use href="#sclf"/></svg></b><b class="off"><svg><use href="#simp"/></svg></b><b class="off"><svg><use href="#ring"/></svg></b><b class="off"><svg><use href="#part"/></svg></b><b class="off"><svg><use href="#ring"/></svg></b><b class="off"><svg><use href="#dring"/></svg></b><b class="off"><svg><use href="#dpart"/></svg></b><b class="off"><svg><use href="#resh"/></svg></b><b class="off"><svg><use href="#offs"/></svg></b><b class="off"><svg><use href="#spf"/></svg></b><b class="off"><svg><use href="#spx"/></svg></b><b class="off"><svg><use href="#sc"/></svg></b><b class="off"><svg><use href="#sc"/></svg></b><b class="off"><svg><use href="#mrg"/></svg></b><b class="off"><svg><use href="#attr"/></svg></b><b class="d off"><svg><use href="#rpt"/></svg></b><i class="grip"></i>
<b class="mg"><svg><use href="#mag"/></svg></b><b class="m off"><svg><use href="#vall"/></svg></b><b class="m on dim"><svg><use href="#dots"/></svg></b><span class="spin dis w83">12<i class="ud"></i></span><span class="combo dis w87">px</span><b><svg><use href="#topo"/></svg></b><b class="m"><svg><use href="#over"/></svg></b><b class="off"><svg><use href="#xx"/></svg></b><b class="d off"><svg><use href="#selfx"/></svg></b><b class="off"><svg><use href="#trc"/></svg></b></div>

<div class="bar last"><i class="grip"></i>
<b><svg><use href="#gpsd"/></svg></b><b class="off"><svg><use href="#tgt"/></svg></b><i class="sep"></i><b class="m"><svg><use href="#recen"/></svg></b><b class="off"><svg><use href="#tadd"/></svg></b><b><svg><use href="#addp"/></svg></b><b class="off"><svg><use href="#trk"/></svg></b><i class="sep"></i><b><svg><use href="#info"/></svg></b><b><svg><use href="#wren"/></svg></b><i class="grip far"></i>
<b><svg><use href="#pyc"/></svg></b><b><svg><use href="#qms"/></svg></b><span class="reload"><svg><use href="#rel"/></svg><em>Reload plugin: basemap_loader</em></span><b><svg><use href="#leaf"/></svg></b><i class="grip"></i>
<em class="lab">Select a basemap</em><span class="combo w150">OpenStreetMap</span><b><svg><use href="#fold"/></svg></b><i class="grip"></i><b><svg><use href="#cld"/></svg></b><b><svg><use href="#cldg"/></svg></b><i class="sep"></i><b><svg><use href="#bdn"/></svg></b><b><svg><use href="#bup"/></svg></b><b><svg><use href="#hmr"/></svg></b><i class="grip"></i><b><svg><use href="#idr"/></svg></b></div>

<main>
<section class="dock left">
<h2>Layers<svg class="dw" viewBox="0 0 25 11"><rect x=".5" y=".5" width="10" height="10" rx="2"/><path d="M2.500 5h4v4h-4zM4.500 5V2.500h4v4H6.500"/><rect x="14.500" y=".5" width="10" height="10" rx="2"/><path d="M17 3l5 5M22 3l-5 5" stroke-width="2"/></svg></h2>
<div class="tools"><b><svg><use href="#brush"/></svg></b><b><svg><use href="#grp"/></svg></b><b class="m"><svg><use href="#eye"/></svg></b><b class="m"><svg><use href="#filt"/></svg></b><b class="d"><svg><use href="#epf"/></svg></b><b><svg><use href="#exp"/></svg></b><b><svg><use href="#col"/></svg></b><b><svg><use href="#rml"/></svg></b></div>
<div class="tree"><div class="layer"><i class="chk"></i><i class="sw"></i><strong>utsav</strong></div></div>
</section>
<div class="split"></div>
<svg class="map" viewBox="314 198 1271 813">
<path class="fill" d="M793.400 225.300L879.900 230.300 964.800 236 961.700 285.300 957.900 334 954.500 382.300 951 431.300 946.800 480.300 943.800 528.300 940.300 576.700 936.500 626 932.700 674.300 928.400 723 926.500 755.700 924.200 787.300 841.200 783.300 838.500 826.300 751.700 801.700 755.900 760.700 759.300 711.300 762 663.300 765.800 615 769.600 565 773.100 517 776.500 468.700 779.600 419.300 783.800 370.700 786.900 322.700 789.900 273.300z
M702.700 338.700L736.700 340.300 733.700 372.700 731.400 404.700 724.100 501.700 640.700 496 589.800 492.700 539.300 489.300 470.800 485 411.900 481.300 416.800 425 475.800 428.300 479.200 388 545.400 392.700 595.500 395.700 647.600 399.300 682.400 401 692.300 369.700z
M612.400 533.300L661.700 537 721.400 541.700 716.800 604.300 711.500 671.300 706.500 735 703.400 783.700 592.500 776.300 596.700 728.300 602.400 663.300 607.800 599z
M1002.700 237.300L1088 243.300 1173.700 249.300 1169.700 297.300 1166.300 345.700 1162.700 393.300 1159.700 442.300 1155 491.300 1150.700 540 1066.300 535.700 1062.700 584.700 1029.300 583 1024.700 647.300 973.300 644 977.700 579.300 982 530.300 985 481.700 988.700 432.700 992 384 996 335 999 286z
M1219.300 258.700L1341 253.300 1440 249.300 1440.300 316.300 1441 383.300 1441.700 450.300 1342.700 454.700 1343.300 521.700 1442.700 517 1442.700 584.300 1443.700 651.700 1433 681 1261.700 662.700 1259 624 1244.300 592.700 1239.300 582.300 1190.700 567.700 1196 527.300 1203.700 460 1209 392.700 1214.300 325.700z"/>
<path class="lines" d="M879.900 230.300L876.400 279.300 872.600 327.700 869.500 376.700 865.700 425.300 862.200 474.700 860 523.300 855.400 572.300 851.500 621.300 847.700 669.700 844.600 718.700 843.100 750 841.600 767.700 841.200 783.300
M789.900 273.300L876.400 279.300 961.700 285.300M786.900 322.700L872.600 327.700 957.900 334M783.800 370.700L869.500 376.700 954.500 382.300M779.600 419.300L865.700 425.300 951 431.300M776.500 468.700L862.200 474.700 946.800 480.300M773.100 517L860 523.300 943.800 528.300M769.600 565L855.400 572.300 940.300 576.700M765.800 615L851.500 621.300 936.500 626M762 663.300L847.700 669.700 932.700 674.300M759.300 711.300L844.600 718.700 928.400 723M843.100 750L926.500 755.700M755.900 760.700L841.600 767.700
M692.300 369.700L733.700 372.700M682.400 401L731.400 404.700M475.800 428.300L470.800 485M545.400 392.700L539.300 489.300M595.500 395.700L589.800 492.700M647.600 399.300L643.800 448 640.700 496M643.800 448L727.200 453
M661.700 537L657.500 601M607.800 599L716.800 604.300M602.400 663.300L711.500 671.300M596.700 728.300L706.500 735
M1088 243.300L1084.300 291.300 1081 340.700 1077.300 389.700 1073.700 438.300 1069.700 487.300 1066.300 535.700M999 286L1084.300 291.300 1169.700 297.300M996 335L1081 340.700 1166.300 345.700M992 384L1077.300 389.700 1162.700 393.300M988.700 432.700L1073.700 438.300 1159.700 442.300M985 481.700L1069.700 487.300 1155 491.300M982 530.300L1066.300 535.700M977.700 579.300L1029.300 583
M1341 253.300L1341.300 320.700 1342 387.300 1342.700 454.700M1343.300 521.700L1343.700 588.300 1344.700 655.700 1443.700 651.700M1214.300 325.700L1341.300 320.700 1440.300 316.300M1209 392.700L1342 387.300 1441 383.300M1203.700 460L1342.700 454.700M1196 527.300L1343.300 521.700M1244.300 592.700L1343.700 588.300 1442.700 584.300"/>
<g class="nums" transform="translate(0.300 4.200)">
<text x="835" y="252.700">117</text><text x="920.400" y="258.300">94</text><text x="831.300" y="301">116</text><text x="917" y="307">95</text><text x="828.200" y="349.700">115</text><text x="913.500" y="355.300">96</text><text x="824.400" y="398">114</text><text x="910" y="404.300">97</text><text x="821" y="447">113</text><text x="906.300" y="453">98</text><text x="817.900" y="496">112</text><text x="903.200" y="502.300">99</text><text x="814.400" y="544.700">111</text><text x="900.100" y="550.700">100</text><text x="810.600" y="593.700">110</text><text x="896.300" y="599.700">101</text><text x="806.800" y="642.700">109</text><text x="892.100" y="648">102</text><text x="803.300" y="691">108</text><text x="888.700" y="696.700">103</text><text x="800.300" y="740">107</text><text x="886" y="737.300">104</text><text x="883.300" y="769.700">105</text><text x="799.100" y="790">106</text>
<text x="716.800" y="356.700">118</text><text x="710" y="388">119</text><text x="687.400" y="426.700">120</text><text x="683.600" y="475.300">121</text><text x="618.500" y="446">122</text><text x="567.600" y="443">123</text><text x="508.700" y="439.300">124</text><text x="444" y="455.300">125</text><text x="634.600" y="568.300">127</text><text x="689.300" y="571.700">126</text><text x="660.200" y="635">128</text><text x="654.500" y="700">129</text><text x="649.900" y="756.300">130</text>
<text x="1043.300" y="265">93</text><text x="1128.700" y="270.700">80</text><text x="1040" y="313.300">92</text><text x="1125" y="319">81</text><text x="1036" y="362.700">91</text><text x="1121.700" y="367.700">82</text><text x="1032.300" y="411.300">90</text><text x="1118.300" y="416.300">83</text><text x="1029" y="460.300">89</text><text x="1114.300" y="465">84</text><text x="1025.300" y="509.300">88</text><text x="1110.300" y="514">85</text><text x="1022" y="558">87</text><text x="1001.300" y="613.700">86</text>
<text x="1279" y="290.300">157A</text><text x="1391" y="285">156</text><text x="1276.700" y="357.300">157A</text><text x="1391.700" y="352">157</text><text x="1274.300" y="424.300">158A</text><text x="1392.300" y="419">158</text><text x="1271.300" y="491.700">159A</text><text x="1273.700" y="556.300">160A</text><text x="1393.300" y="553.300">160</text><text x="1393.300" y="620">161</text><text x="1324.300" y="637.300">161A</text>
</g></svg>
<div class="split"></div>
<section class="dock right">
<h2>Processing Toolbox<svg class="dw" viewBox="0 0 25 11"><rect x=".5" y=".5" width="10" height="10" rx="2"/><path d="M2.500 5h4v4h-4zM4.500 5V2.500h4v4H6.500"/><rect x="14.500" y=".5" width="10" height="10" rx="2"/><path d="M17 3l5 5M22 3l-5 5" stroke-width="2"/></svg></h2>
<div class="tools"><b class="m"><svg><use href="#gears"/></svg></b><b class="m"><svg><use href="#py"/></svg></b><b><svg><use href="#clock"/></svg></b><b><svg><use href="#doc"/></svg></b><i class="sep"></i><b><svg><use href="#edm"/></svg></b><i class="sep"></i><b><svg><use href="#wren"/></svg></b></div>
<div class="search"><svg><use href="#lens"/></svg>Search…</div>
<ul class="tree">
<li><svg><use href="#clock"/></svg>Recently used</li><li><svg><use href="#q"/></svg>3D Tiles</li><li><svg><use href="#q"/></svg>Cartography</li><li><svg><use href="#q"/></svg>Database</li><li><svg><use href="#q"/></svg>File tools</li><li><svg><use href="#q"/></svg>GPS</li><li><svg><use href="#q"/></svg>Interpolation</li><li><svg><use href="#q"/></svg>Layer tools</li><li><svg><use href="#q"/></svg>Mesh</li><li><svg><use href="#q"/></svg>Network analysis</li><li><svg><use href="#q"/></svg>Plots</li><li><svg><use href="#q"/></svg>Point cloud conversion</li><li><svg><use href="#q"/></svg>Point cloud data management</li><li><svg><use href="#q"/></svg>Point cloud extraction</li><li><svg><use href="#q"/></svg>Raster analysis</li><li><svg><use href="#q"/></svg>Raster creation</li><li><svg><use href="#q"/></svg>Raster terrain analysis</li><li><svg><use href="#q"/></svg>Raster tools</li><li><svg><use href="#q"/></svg>Vector analysis</li><li><svg><use href="#q"/></svg>Vector coverage</li><li><svg><use href="#q"/></svg>Vector creation</li><li><svg><use href="#q"/></svg>Vector general</li><li><svg><use href="#q"/></svg>Vector geometry</li><li><svg><use href="#q"/></svg>Vector overlay</li><li><svg><use href="#q"/></svg>Vector selection</li><li><svg><use href="#q"/></svg>Vector table</li><li><svg><use href="#q"/></svg>Vector tiles</li><li><svg><use href="#gdal"/></svg>GDAL</li><li><svg><use href="#grs"/></svg>GRASS</li><li><svg><use href="#gears"/></svg>Models</li><li class="short"><svg><use href="#ors"/></svg>ORS Tools</li><li class="tall"><svg><use href="#sgear"/></svg>qgis2web</li><li><svg><use href="#py"/></svg>Scripts</li><li><svg><use href="#xls"/></svg>XLSForm Converter</li>
</ul>
</section>
</main>

<footer class="status">
<div class="search loc"><svg><use href="#lens"/></svg>Type to locate (Ctrl+K)</div>
<span class="lb c1">Coordinate</span><span class="field c2">12.669231°, 77.824804°</span>
<svg class="sat" viewBox="0 0 16 18"><path d="M1 3l4-2 9 13-4 3z" fill="#666" stroke="#222"/><path d="M9 4l3-3 2 3-3 4M2 10l4-2 3 5-4 2z" fill="none" stroke="#333"/><path d="M4 4l7 10" stroke="#fff" stroke-dasharray="1.500 1.500"/></svg>
<span class="lb c3">Scale</span><span class="field c4 sc">1:609</span>
<svg class="lock" viewBox="0 0 14 18"><path d="M3.500 9V5.500a3.500 3.500 0 0 1 7 0V9" fill="none" stroke="#aaa" stroke-width="1.800"/><rect x="1" y="8" width="12" height="9" rx="1.500" fill="#666"/></svg>
<span class="lb c5">Magnifier</span><span class="spin c6">100%<i class="ud"></i></span>
<span class="lb c7">Rotation</span><span class="spin c6">0.0 °<i class="ud"></i></span>
<i class="chk"></i><span class="lb c8">Render</span>
<svg class="crs" viewBox="0 0 16 16"><circle cx="8" cy="8" r="6.500" fill="#888"/><path d="M1 8h14M3 4.500h10M3 11.500h10M8 1v14M8 1C3 5 3 11 8 15M8 1c5 4 5 10 0 14" fill="none" stroke="#eee" stroke-width=".700"/><path d="M0 8h16" stroke="#666" stroke-width=".800"/></svg><span class="lb c9">EPSG:4326</span>
<svg class="msg" viewBox="0 0 16 16"><path d="M8 1c10 0 9 11 4 11.500L13 16l-5-3C-2 13-2 1 8 1z" fill="#5c5c5c"/><path d="M4 7h1.600M7.200 7h1.600M10.400 7H12" stroke="#fff" stroke-width="1.600"/></svg>
</footer>

<footer class="task">
<span><svg viewBox="0 0 16 16"><path d="M0 2.300L6.600 1.400V7.600H0zM7.400 1.300L16 0v7.600H7.400zM0 8.400h6.600v6.200L0 13.700zM7.400 8.400H16V16l-8.600-1.300z" fill="#fff"/></svg></span>
<span><svg class="s22" viewBox="0 0 22 22"><circle cx="13" cy="9" r="7.800" fill="none" stroke="#fff" stroke-width="2"/><path d="M7.500 14.500L1 21.500" stroke="#fff" stroke-width="2.200"/></svg></span>
<span><svg viewBox="0 0 16 16"><path d="M.5 0v2.500h10V0M.5 5h10v6H.5zM.5 16v-2.500h10V16M14.500 0v16" fill="none" stroke="#fff" stroke-width="1.200"/><path d="M13 4h3v3h-3z" fill="#fff"/></svg></span>
<span class="x51"><svg class="s22" viewBox="0 0 24 24"><path d="M8 2h7q2 0 1 3l-3 10q-1 4-4 4H4q-4 0-3-4l3-9q1-4 4-4z" fill="url(#cp1)"/><path d="M16 22H9q-2 0-1-3l3-10q1-4 4-4h5q4 0 3 4l-3 9q-1 4-4 4z" fill="url(#cp2)"/><path d="M10.500 8h4l-2.500 8H8.500z" fill="#23343f"/></svg></span>
<span class="run x49"><svg class="s22" viewBox="0 0 22 20"><path d="M0 1h9l2 3h11v15H0z" fill="#e8a820"/><path d="M0 5h22v14H0z" fill="#ffd35a"/><path d="M4 19v-6q0-2 2-2h10q2 0 2 2v6h-4v-4H8v4z" fill="#3f9be0"/></svg></span>
<span class="run x49"><svg class="s24"><use href="#chr"/></svg></span>
<span class="act"><svg class="s24"><use href="#q"/></svg></span>
<svg class="tray" viewBox="0 0 92 24" fill="none" stroke="#fff"><path d="M1 15l5-5 5 5" stroke-width="1.300"/><path d="M26 6q4-3 8 0M26 19q4 3 8 0M26.500 8.500h6v7h-6zM32.500 10l3-1v6l-3-1" stroke-width="1.200"/><path d="M50.500 7.500h11v8h-11zM56 16v3M52.500 19h7M48 6.500h4v4h-4z"/><path d="M72 10h2l3.500-3v10L74 14h-2zM79.500 9.500q2 2.500 0 5"/><path d="M82 8q3 4 0 8M84.500 6.500q4 5.500 0 11" stroke="#8a949a"/></svg>
<div class="time">15:01<br>29-07-2025</div>
<svg class="note" viewBox="0 0 16 16"><path d="M0 0h16v13h-6l-2 3-2-3H0z" fill="#fff"/><path d="M3 3.500h10M3 6.500h10M3 9.500h7" stroke="#1d2a31" stroke-width="1.200"/></svg>
<i class="peek"></i>
</footer>
</body>
</html>
```
FILE: styles.css
```css
* { box-sizing: border-box; }
body {
  margin: 0;
  width: 1920px;
  height: 1080px;
  overflow: hidden;
  display: flex;
  flex-direction: column;
  background: #efefef;
  color: #000;
  font: 11px/14px "Noto Sans", sans-serif;
  letter-spacing: -0.33px;
  white-space: nowrap;
}
i, em { font-style: normal; }
svg { flex: none; display: block; }
.grads { position: absolute; width: 0; height: 0; }
.defs { display: none; }
.lt { font: bold 8.5px "DejaVu Sans", sans-serif; letter-spacing: -0.6px; fill: #333; }
.red { fill: #e22; }

/* title and menu */
.title { height: 23px; background: #fff; display: flex; align-items: center; padding-left: 2px; font-size: 12px; letter-spacing: -0.45px; }
.title .logo { width: 16px; height: 16px; margin-right: 5px; }
.title .wc { width: 104px; height: 12px; margin: -3px 17px 0 auto; }
.menu {
  height: 18px;
  padding-left: 9px;
  border-bottom: 1px solid #d6d6d6;
  display: grid;
  grid-template-columns: 48px 32px 36px 41px 53px 47px 45px 46px 36px 39px 55px 65px 40px;
  align-items: center;
  letter-spacing: -0.4px;
}
.menu u { text-underline-offset: 2px; }

/* toolbars */
.bar {
  height: 39px;
  display: flex;
  align-items: center;
  background: linear-gradient(#fafafa, #eee);
  border-bottom: 1px solid #b4b4b4;
}
.bar.last { height: 38px; }
.grip { width: 16px; flex: none; padding-left: 8px; }
.grip::before { content: ""; display: block; width: 5px; height: 20px; background: conic-gradient(from 270deg at 1px 1px, #bcbcbc 90deg, transparent 0) 0 0 / 2px 3px; }
.grip:first-child { width: 12.5px; padding-left: 5px; }
.grip.far { width: 69px; padding-left: 61px; }
.sep { width: 8px; height: 20px; flex: none; background: linear-gradient(#d4d4d4, #d4d4d4) 4px 0 / 1px 100% no-repeat; }
.last .sep { width: 6px; background-position: 3px 0; }
b { width: 33px; height: 32px; flex: none; display: flex; align-items: center; padding-left: 4.5px; position: relative; }
b svg { width: 24px; height: 24px; }
b.d { width: 45px; }
b.d::after { content: ""; margin-left: 5px; border: 5px solid transparent; border-top-color: #555; border-bottom: 0; }
b.m::after { content: ""; position: absolute; right: 3px; bottom: 3px; border: 3.5px solid transparent; border-top: 4px solid #444; border-bottom: 0; }
b.on { height: 31px; width: 32px; margin-right: 1px; padding-left: 3px; background: #dcdcdc; border: 1px solid #a8a8a8; border-radius: 3px; }
b.off svg { opacity: .34; filter: grayscale(.7); }
b.off::after, b.dim::after { opacity: .5; }
b.mg { padding-left: 6px; }
.spin, .combo, .field, .search { background: #fff; border: 1px solid #a9a9a9; border-radius: 3px; display: flex; align-items: center; flex: none; height: 21px; padding-left: 4px; }
.spin { justify-content: space-between; }
.dis { background: #efefef; color: #777; border-color: #b8b8b8; }
.w83 { width: 84px; margin-right: 2px; }
.w87 { width: 87px; height: 22px; margin-right: 2px; }
.w150 { width: 150px; height: 22px; }
.combo { justify-content: space-between; padding-right: 6px; }
.combo::after, .sc::after { content: ""; border: 4.5px solid transparent; border-top: 5px solid #555; border-bottom: 0; }
.combo.dis { background: #f4f4f4; }
.combo.dis::after { opacity: .6; }
.ud { width: 14px; height: 100%; border-left: 1px solid #b4b4b4; display: flex; flex-direction: column; align-items: center; justify-content: center; gap: 4px; }
.ud::before, .ud::after { content: ""; border: 4px solid transparent; }
.ud::before { border-top: 0; border-bottom: 5px solid #666; }
.ud::after { border-bottom: 0; border-top: 5px solid #666; }
.dis .ud { opacity: .6; }
.reload { width: 205px; display: flex; align-items: center; padding-left: 4px; letter-spacing: -0.4px; }
.reload svg { width: 22px; height: 24px; margin-right: 2px; }
.reload::after { content: ""; margin: 0 3px 0 auto; border: 4px solid transparent; border-top: 5px solid #444; border-bottom: 0; }
.lab { width: 86px; }

/* docks and map */
main { flex: 1; display: flex; min-height: 0; padding-top: 1px; }
.dock { display: flex; flex-direction: column; }
.left { width: 307px; }
.right { width: 328px; }
h2 { margin: 0; height: 21px; padding: 3px 2px 0 3px; font: inherit; display: flex; justify-content: space-between; }
.right h2 { padding: 3px 1px 0 2px; }
.dw { width: 25px; height: 11px; margin-top: 1px; fill: none; stroke: #666; }
.tools { height: 29px; display: flex; align-items: center; padding: 0 0 4px 3px; }
.tools b { width: 25.2px; height: 24px; padding-left: 4.5px; }
.tools b svg { width: 16px; height: 16px; }
.tools b.d { width: 37px; }
.tools b.m::after { right: 0; bottom: 2px; border-width: 3px 3px 0; }
.tools .sep { height: 12px; width: 7px; }
.tree { flex: 1; margin: 0; padding: 0; list-style: none; background: #fff; border: 1px solid #b4b4b4; }
.layer { height: 18px; background: #efefef; display: flex; align-items: center; padding-left: 23px; }
.layer strong { text-decoration: underline; text-underline-offset: 2px; letter-spacing: 0; margin-top: 1px; font-family: "DejaVu Sans", sans-serif; font-stretch: condensed; }
.chk { width: 14px; height: 14px; flex: none; background: #fff; border: 1px solid #b0b0b0; display: flex; justify-content: center; }
.chk::after { content: ""; width: 5px; height: 9px; border: solid #000; border-width: 0 2px 2px 0; transform: rotate(35deg); }
.sw { width: 16px; height: 16px; margin: 0 6px; background: #729b6f; border: 1px solid #4e6a4c; }
.split { width: 6px; background: radial-gradient(circle, #bbb 0.7px, transparent 1px) 2px 400px / 2px 4px no-repeat; }
.map { flex: 1; height: 815px; background: #fff; border: 1px solid #b4b4b4; }
.fill { fill: #729b6f; stroke: #232323; stroke-width: 1; }
.lines { fill: none; stroke: #232323; stroke-width: 1.1; }
.nums { font: 13px "Liberation Sans", Arial, sans-serif; letter-spacing: 0; text-anchor: middle; fill: #323232; }
.search { color: #808080; height: 22px; padding-left: 8px; }
.search svg { width: 13px; height: 13px; margin-right: 7px; }
.right .tree { padding-top: 1px; letter-spacing: -0.5px; }
.tree li { height: 18px; display: flex; align-items: center; padding-left: 8px; }
.tree li.short { height: 14px; }
.tree li.tall { height: 19px; }
.tree li::before { content: ""; border: 4px solid transparent; border-left: 4px solid #555; border-right: 0; margin-right: 11px; }
.tree li svg { width: 16px; height: 15px; margin-right: 5px; }

/* status bar */
.status { height: 28px; display: flex; align-items: center; padding: 0 0 1px 4px; }
.loc { width: 200px; }
.lb { flex: none; }
.c1 { margin-left: 882px; width: 57px; }
.c2 { width: 135px; padding-left: 7px; letter-spacing: -0.3px; }
.sat { width: 16px; height: 18px; margin: 0 12px 0 5px; }
.c3 { width: 29px; }
.c4 { width: 80px; }
.sc { justify-content: space-between; padding-right: 5px; background: linear-gradient(#b4b4b4, #b4b4b4) 58px 0 / 1px 100% no-repeat #fff; }
.lock { width: 14px; height: 18px; margin: 0 7px 0 12px; }
.c5 { width: 48px; letter-spacing: -0.6px; }
.c6 { width: 83px; }
.c7 { margin-left: 9px; width: 51px; }
.status .chk { margin-left: 6px; }
.c8 { margin-left: 4px; width: 51px; }
.crs { width: 16px; height: 16px; }
.c9 { width: 78px; }
.msg { width: 16px; height: 16px; }

/* taskbar */
.task { height: 40px; display: flex; align-items: center; background: linear-gradient(90deg, #23343f, #24353f 55%, #22303a 68%, #2b2b2c 76%, #1c2c35 86%, #1a2a32); color: #fff; }
.task span { width: 48px; height: 40px; display: flex; align-items: center; justify-content: center; }
.task span svg { width: 16px; height: 16px; }
.task span svg.s22 { width: 22px; height: 22px; }
.task span svg.s24 { width: 24px; height: 24px; }
.task .x51 { width: 52px; }
.task .x49 { width: 49px; }
.task .run { background: linear-gradient(#fbd3a5, #fbd3a5) 50% 38px / 40px 2px no-repeat; }
.task .act { background: linear-gradient(#fbd3a5, #fbd3a5) 0 38px / 48px 2px no-repeat, linear-gradient(90deg, #53616a 44px, #2c3a42 44px 45px, #4c5a62 45px); }
.tray { width: 92px; height: 24px; margin-left: auto; }
.time { width: 60px; margin: 0 17px 0 3px; text-align: center; line-height: 18px; font-size: 12px; letter-spacing: -0.4px; }
.note { width: 16px; height: 17px; }
.peek { width: 1px; height: 40px; background: #6a767c; margin: 0 4px 0 20px; }
```
